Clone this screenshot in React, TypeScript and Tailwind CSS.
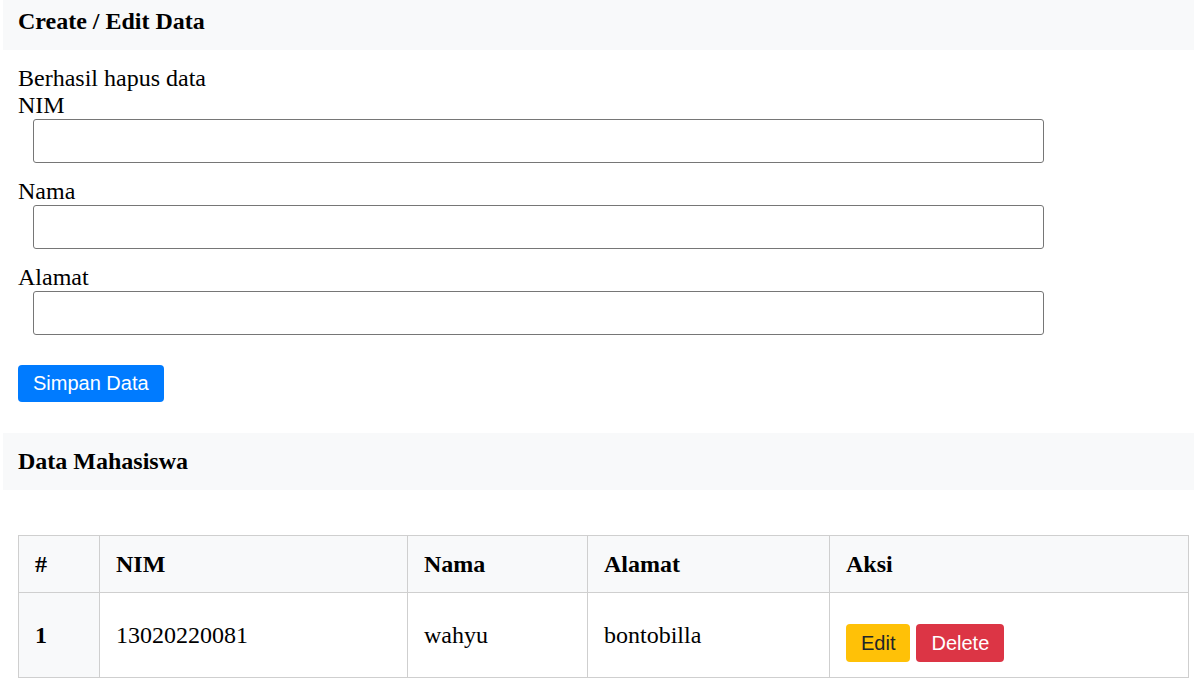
import React from "react";

function Field({ label }: { label: string }) {
  return (
    <div>
      <div>{label}</div>
      <input
        type="text"
        className="block ml-[15px] mb-[15px] h-[44px] w-[1011px] border border-[#767676] rounded-[3px] bg-white outline-none"
      />
    </div>
  );
}

export default function App() {
  return (
    <div
      className="bg-white text-black text-[24px] leading-[27px] w-[1194px] h-[698px] overflow-hidden"
      style={{ fontFamily: '"Liberation Serif", "Times New Roman", serif' }}
    >
      <div className="ml-[3px] bg-[#f8f9fa] pt-[8px] pb-[15px] pl-[15px] font-bold">
        Create / Edit Data
      </div>

      <div className="px-[18px] pt-[15px]">
        <div>Berhasil hapus data</div>
        <Field label="NIM" />
        <Field label="Nama" />
        <Field label="Alamat" />
        <button
          className="mt-[15px] h-[37px] px-[15px] rounded-[4px] bg-[#007bff] text-white text-[20px] leading-[37px]"
          style={{ fontFamily: '"Liberation Sans", Arial, sans-serif' }}
        >
          Simpan Data
        </button>
      </div>

      <div className="mt-[31px] ml-[3px] bg-[#f8f9fa] pt-[15px] pb-[15px] pl-[15px] font-bold">
        Data Mahasiswa
      </div>

      <div className="pl-[18px] mt-[45px]">
        <table className="table-fixed border-collapse w-[1170px] border border-[#cfcfcf]">
          <colgroup>
            <col className="w-[81px]" />
            <col className="w-[308px]" />
            <col className="w-[180px]" />
            <col className="w-[242px]" />
            <col className="w-[359px]" />
          </colgroup>
          <thead>
            <tr className="bg-[#f8f9fa]">
              <th className="h-[57px] border border-[#cfcfcf] px-[16px] text-left align-middle font-bold">#</th>
              <th className="border border-[#cfcfcf] px-[16px] text-left align-middle font-bold">NIM</th>
              <th className="border border-[#cfcfcf] px-[16px] text-left align-middle font-bold">Nama</th>
              <th className="border border-[#cfcfcf] px-[16px] text-left align-middle font-bold">Alamat</th>
              <th className="border border-[#cfcfcf] px-[16px] text-left align-middle font-bold">Aksi</th>
            </tr>
          </thead>
          <tbody>
            <tr>
              <th className="h-[85px] border border-[#cfcfcf] bg-[#f8f9fa] px-[16px] text-left align-middle font-bold">1</th>
              <td className="border border-[#cfcfcf] px-[16px] align-middle">13020220081</td>
              <td className="border border-[#cfcfcf] px-[16px] align-middle">wahyu</td>
              <td className="border border-[#cfcfcf] px-[16px] align-middle">bontobilla</td>
              <td className="border border-[#cfcfcf] px-[16px] align-middle">
                <div
                  className="mt-[15px] flex gap-[6px] text-[20px]"
                  style={{ fontFamily: '"Liberation Sans", Arial, sans-serif' }}
                >
                  <button className="h-[38px] px-[15px] rounded-[4px] bg-[#ffc107] text-[#212529] leading-[38px]">
                    Edit
                  </button>
                  <button className="h-[38px] px-[15px] rounded-[4px] bg-[#dc3545] text-white leading-[38px]">
                    Delete
                  </button>
                </div>
              </td>
            </tr>
          </tbody>
        </table>
      </div>
    </div>
  );
}
